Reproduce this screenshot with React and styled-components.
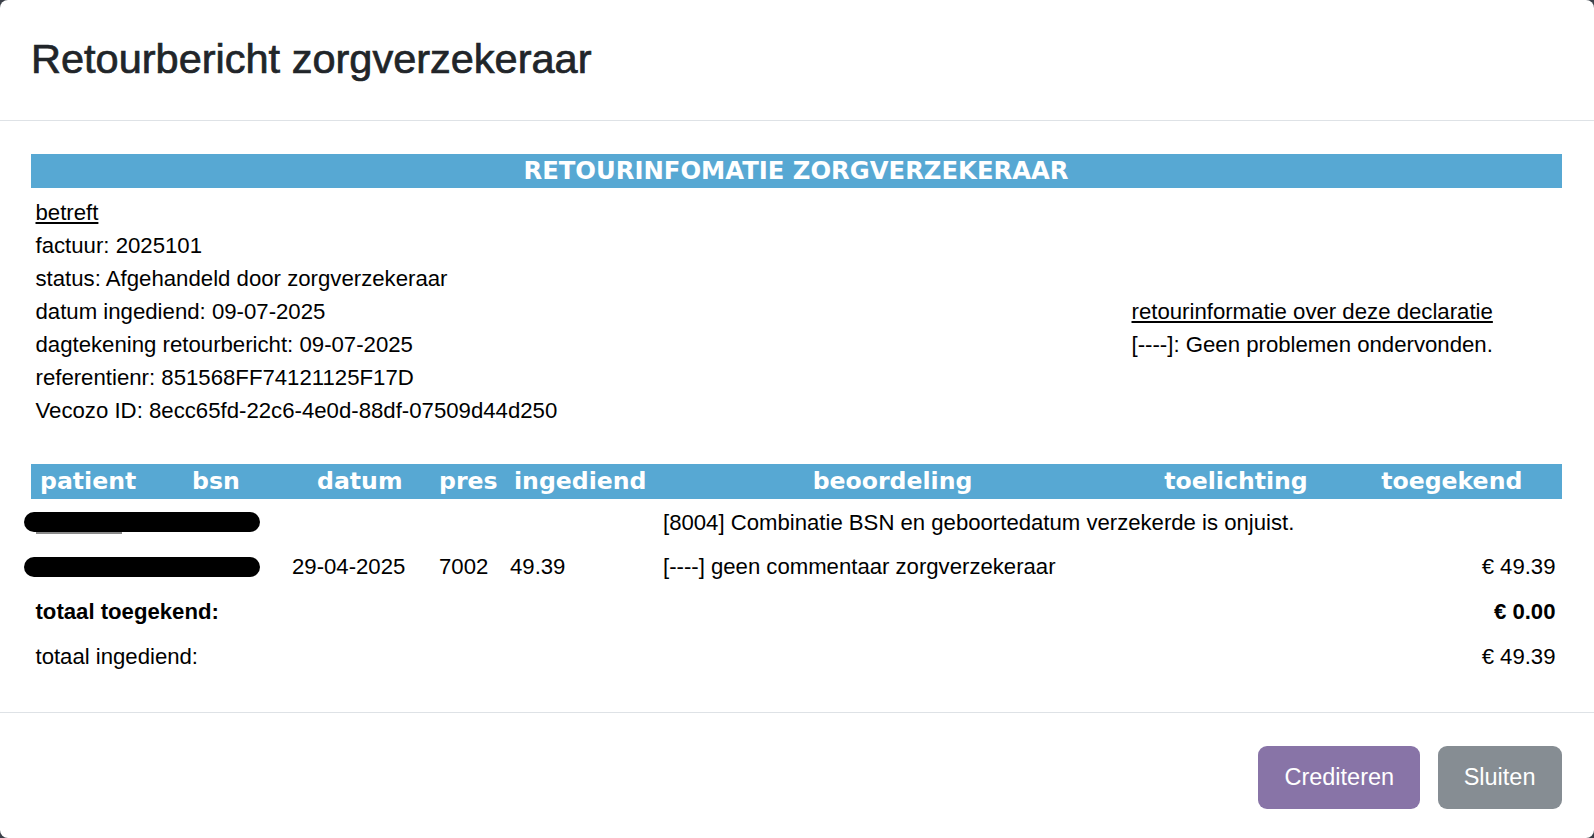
import React from "react";
import styled, { createGlobalStyle } from "styled-components";

const blue = "#57a8d3";

const GlobalStyle = createGlobalStyle`
  html, body {
    margin: 0;
    padding: 0;
  }
  body {
    background: #3b4049;
    font-family: "Liberation Sans", Arial, sans-serif;
    color: #000;
  }
`;

const Modal = styled.div`
  width: 1594px;
  height: 838px;
  background: #fff;
  border-radius: 8px;
  display: flex;
  flex-direction: column;
  overflow: hidden;
`;

const Header = styled.div`
  padding: 34px 31px 37px;
  border-bottom: 1px solid #dee2e6;
`;

const Title = styled.h5`
  margin: 0;
  font-size: 41.5px;
  line-height: 49px;
  font-weight: 500;
  color: #212529;
  -webkit-text-stroke: 0.7px #212529;
`;

const Body = styled.div`
  flex: 1;
  padding: 32.5px 32.5px 0 30.5px;
`;

const Banner = styled.div`
  background: ${blue};
  color: #fff;
  text-align: center;
  font-family: "DejaVu Sans", Verdana, sans-serif;
  font-weight: bold;
  font-size: 24.3px;
  line-height: 34.5px;
`;

const Info = styled.div`
  display: grid;
  grid-template-columns: 1096px 1fr;
  padding: 7.5px 0 0 5px;
  font-size: 22.2px;
  line-height: 33px;
`;

const Column = styled.div`
  padding-top: ${(p) => p.$offset || 0}px;
`;

const Line = styled.div`
  white-space: nowrap;
  text-decoration: ${(p) => (p.$underline ? "underline" : "none")};
  text-underline-offset: 2px;
`;

const Table = styled.div`
  margin-top: 37px;
`;

const HeadRow = styled.div`
  display: grid;
  grid-template-columns: 152px 125px 122px 75px 141px 475px 212px 1fr;
  padding-left: 9.5px;
  background: ${blue};
  color: #fff;
  font-family: "DejaVu Sans", Verdana, sans-serif;
  font-weight: bold;
  font-size: 23.6px;
  line-height: 35.5px;
`;

const HeadCell = styled.div`
  text-align: ${(p) => p.$align || "left"};
  white-space: nowrap;
`;

const Row = styled.div`
  display: grid;
  grid-template-columns: 261.5px 147px 71px 153px 1fr auto;
  align-items: center;
  height: 45px;
  padding-right: 6px;
  font-size: 22.15px;
`;

const Cell = styled.div`
  white-space: nowrap;
  text-align: ${(p) => p.$align || "left"};
  padding-top: ${(p) => (p.$drop ? 3 : 0)}px;
`;

const Redaction = styled.span`
  position: relative;
  display: block;
  margin-left: -7px;
  width: 236px;
  height: 20px;
  border-radius: 10px;
  background: #000;

  &::after {
    content: "";
    display: ${(p) => (p.$trace ? "block" : "none")};
    position: absolute;
    left: 12px;
    bottom: -2px;
    width: 86px;
    height: 2px;
    background: #8a8a8a;
  }
`;

const TotalRow = styled.div`
  display: flex;
  justify-content: space-between;
  align-items: center;
  height: 45px;
  padding: 0 6px 0 5px;
  font-size: 22.15px;
  font-weight: ${(p) => (p.$bold ? 700 : 400)};
`;

const Footer = styled.div`
  border-top: 1px solid #dee2e6;
  padding: 33px 32.5px 29px;
  display: flex;
  justify-content: flex-end;
  gap: 17.5px;
`;

const Button = styled.button`
  border: none;
  border-radius: 9px;
  padding: 14px 26px;
  font-family: "Liberation Sans", Arial, sans-serif;
  font-size: 23.5px;
  line-height: 35px;
  color: #fff;
  cursor: pointer;
  background: ${(p) => (p.$variant === "primary" ? "#8874a7" : "#868d93")};
`;

const details = [
  "factuur: 2025101",
  "status: Afgehandeld door zorgverzekeraar",
  "datum ingediend: 09-07-2025",
  "dagtekening retourbericht: 09-07-2025",
  "referentienr: 851568FF74121125F17D",
  "Vecozo ID: 8ecc65fd-22c6-4e0d-88df-07509d44d250",
];

const columns = [
  { label: "patient" },
  { label: "bsn" },
  { label: "datum" },
  { label: "pres" },
  { label: "ingediend" },
  { label: "beoordeling", align: "center" },
  { label: "toelichting", align: "center" },
  { label: "toegekend", align: "center" },
];

const lines = [
  {
    trace: true,
    drop: true,
    datum: "",
    pres: "",
    ingediend: "",
    beoordeling: "[8004] Combinatie BSN en geboortedatum verzekerde is onjuist.",
    toegekend: "",
  },
  {
    datum: "29-04-2025",
    pres: "7002",
    ingediend: "49.39",
    beoordeling: "[----] geen commentaar zorgverzekeraar",
    toegekend: "€ 49.39",
  },
];

export default function App() {
  return (
    <>
      <GlobalStyle />
      <Modal>
        <Header>
          <Title>Retourbericht zorgverzekeraar</Title>
        </Header>
        <Body>
          <Banner>RETOURINFOMATIE ZORGVERZEKERAAR</Banner>
          <Info>
            <Column>
              <Line $underline>betreft</Line>
              {details.map((d) => (
                <Line key={d}>{d}</Line>
              ))}
            </Column>
            <Column $offset={99}>
              <Line $underline>retourinformatie over deze declaratie</Line>
              <Line>[----]: Geen problemen ondervonden.</Line>
            </Column>
          </Info>
          <Table>
            <HeadRow>
              {columns.map((c) => (
                <HeadCell key={c.label} $align={c.align}>
                  {c.label}
                </HeadCell>
              ))}
            </HeadRow>
            {lines.map((l, i) => (
              <Row key={i}>
                <Cell>
                  <Redaction $trace={l.trace} />
                </Cell>
                <Cell>{l.datum}</Cell>
                <Cell>{l.pres}</Cell>
                <Cell>{l.ingediend}</Cell>
                <Cell $drop={l.drop}>{l.beoordeling}</Cell>
                <Cell $align="right">{l.toegekend}</Cell>
              </Row>
            ))}
            <TotalRow $bold>
              <span>totaal toegekend:</span>
              <span>€ 0.00</span>
            </TotalRow>
            <TotalRow>
              <span>totaal ingediend:</span>
              <span>€ 49.39</span>
            </TotalRow>
          </Table>
        </Body>
        <Footer>
          <Button $variant="primary">Crediteren</Button>
          <Button>Sluiten</Button>
        </Footer>
      </Modal>
    </>
  );
}
